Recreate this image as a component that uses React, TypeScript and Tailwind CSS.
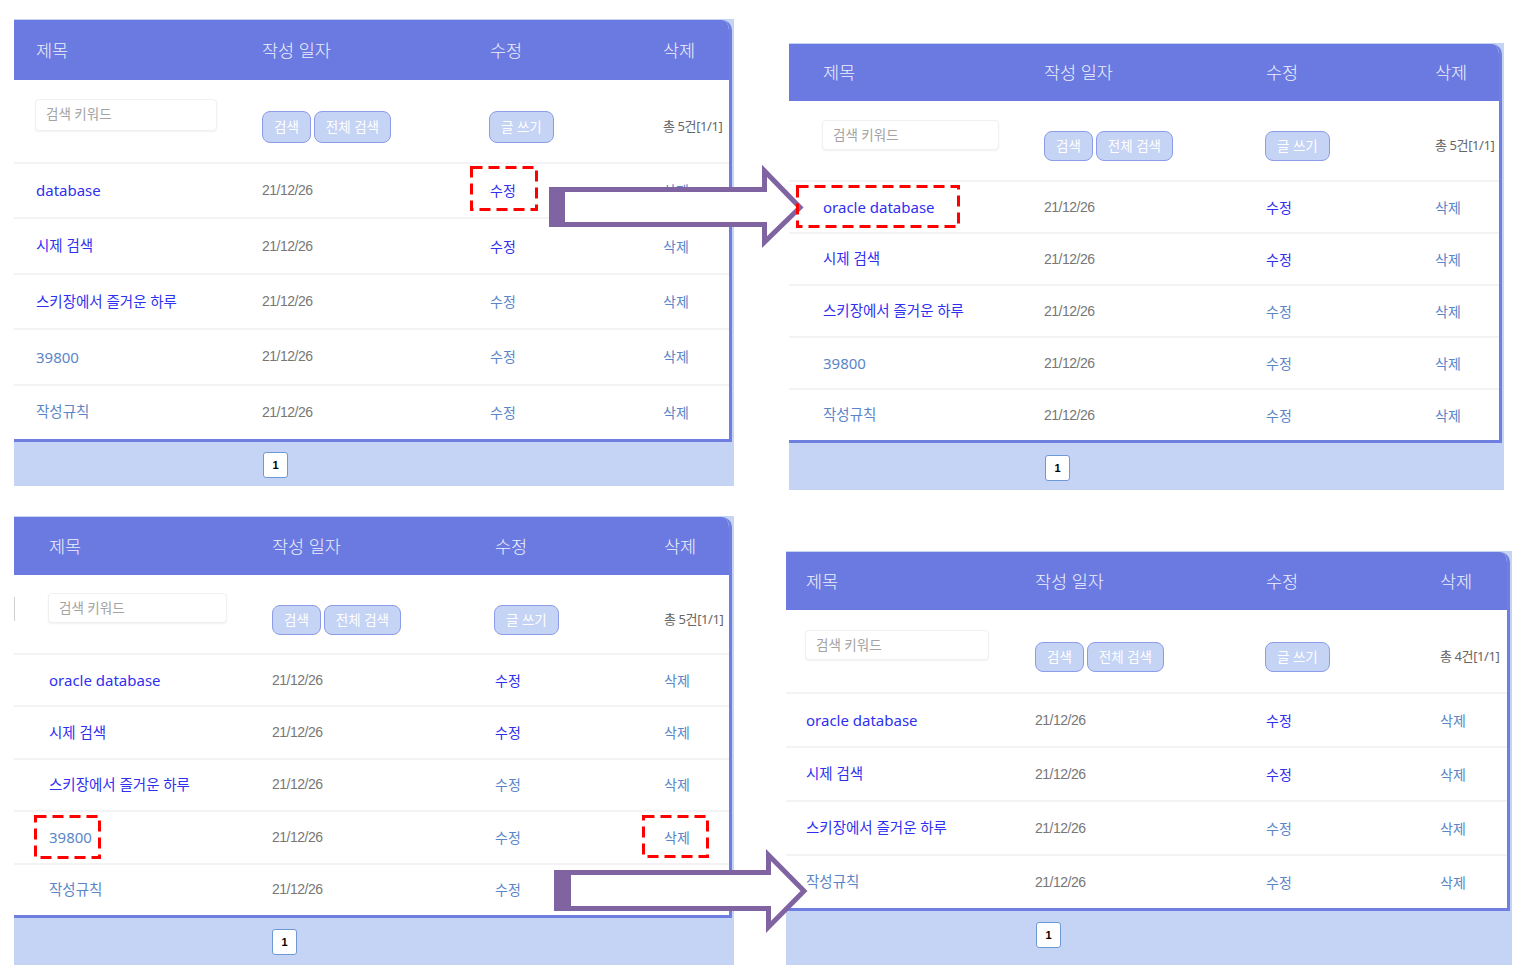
import React from "react";

type Row = {
  title: string;
  latin?: boolean;
  titleVisited?: boolean;
  editVisited?: boolean;
};

type PanelProps = {
  box: string;
  cols: string;
  headerH: string;
  searchH: string;
  inputTop: string;
  inputW: string;
  btnTop: string;
  ctrlH: string;
  rowH: string;
  footerH: string;
  pageLeft: string;
  pageTop: string;
  rows: Row[];
  leftStub?: boolean;
};

const LINK = "text-[#2f2ff0]";
const VISITED = "text-[#5a86c8]";
const FONT = "font-['Noto_Sans','Noto_Sans_CJK_KR',sans-serif]";

const fiveRows = (first: string): Row[] => [
  { title: first, latin: true },
  { title: "시제 검색" },
  { title: "스키장에서 즐거운 하루", editVisited: true },
  { title: "39800", latin: true, titleVisited: true, editVisited: true },
  { title: "작성규칙", titleVisited: true, editVisited: true },
];

function Panel(p: PanelProps) {
  const btn = `rounded-[8px] border-[1.5px] border-[#8d9ce9] bg-[#c5d3f5] px-[11px] text-[13.5px] text-white ${p.ctrlH}`;
  return (
    <div className={`relative flex flex-col bg-[#c5d3f5] pt-[1px] ${FONT} ${p.box}`}>
      <div className="mr-[2px] overflow-hidden rounded-tr-[10px] border-r-[3px] border-b-[3px] border-[#6f7fe0] bg-white">
        {/* header */}
        <div className={`grid items-center bg-[#6b7ae0] text-[17.5px] font-light text-[#eef0fd] ${p.cols} ${p.headerH}`}>
          <span>제목</span>
          <span>작성 일자</span>
          <span>수정</span>
          <span>삭제</span>
        </div>

        {/* search row */}
        <div className={`relative grid items-start ${p.cols} ${p.searchH}`}>
          {p.leftStub && <div className="absolute left-0 top-[22px] h-[24px] w-px bg-[#cfcfcf]" />}
          <div
            className={`-ml-[1px] flex rounded-[4px] border border-[#f0f0f0] bg-white pl-[10px] pt-[4px] text-[13.5px] text-[#a3a3a3] shadow-[0_1px_2px_rgba(0,0,0,0.06)] ${p.inputTop} ${p.inputW} ${p.ctrlH}`}
          >
            검색 키워드
          </div>
          <div className={`flex gap-[3px] ${p.btnTop}`}>
            <button className={btn}>검색</button>
            <button className={btn}>전체 검색</button>
          </div>
          <div className={`-ml-[1px] flex ${p.btnTop}`}>
            <button className={btn}>글 쓰기</button>
          </div>
          <div className={`flex items-center whitespace-nowrap text-[13px] tracking-[-0.4px] text-[#666] ${p.btnTop} ${p.ctrlH}`}>
            총 {p.rows.length}건[1/1]
          </div>
        </div>

        {/* rows */}
        {p.rows.map((r) => (
          <div key={r.title} className={`grid items-center border-t-2 border-[#f3f3f3] ${p.cols} ${p.rowH}`}>
            <span
              className={`whitespace-nowrap ${r.latin ? "text-[15px]" : "text-[14.5px]"} ${r.titleVisited ? VISITED : LINK}`}
            >
              {r.title}
            </span>
            <span className="font-['Liberation_Sans',sans-serif] text-[14px] tracking-[-0.5px] text-[#777]">21/12/26</span>
            <span className={`text-[14px] ${r.editVisited ? VISITED : LINK}`}>수정</span>
            <span className={`text-[14px] ${VISITED}`}>삭제</span>
          </div>
        ))}
      </div>

      {/* footer / pagination */}
      <div className={`flex items-start ${p.footerH}`}>
        <div
          className={`flex h-[26px] w-[25px] items-center justify-center rounded-[3px] border border-[#6d9ad6] bg-white font-['Liberation_Sans',sans-serif] text-[11px] font-bold text-black ${p.pageLeft} ${p.pageTop}`}
        >
          1
        </div>
      </div>
    </div>
  );
}

function Overlay() {
  const purple = "#8064a2";
  return (
    <svg className="pointer-events-none absolute inset-0 h-full w-full" viewBox="0 0 1525 976">
      {/* arrow top */}
      <path
        d="M551.5 189.5 H764.5 V171 L800 207.5 L764.5 242 V224.5 H551.5 Z"
        fill="white"
        stroke={purple}
        strokeWidth="5"
        strokeLinejoin="miter"
      />
      <rect x="549" y="187" width="16" height="40" fill={purple} />
      {/* arrow bottom */}
      <path
        d="M556.5 872.5 H768.5 V855 L804 891 L768.5 927 V908.5 H556.5 Z"
        fill="white"
        stroke={purple}
        strokeWidth="5"
        strokeLinejoin="miter"
      />
      <rect x="554" y="870" width="17" height="41" fill={purple} />

      {/* red dashed highlights */}
      <g fill="none" stroke="#ff0000" strokeWidth="3" strokeDasharray="11 6">
        <rect x="471.5" y="167.5" width="65" height="42" />
        <rect x="797.5" y="186.5" width="161" height="40" />
        <rect x="35.5" y="816.5" width="64" height="41" />
        <rect x="643.5" y="816.5" width="64" height="40" />
      </g>
    </svg>
  );
}

export default function App() {
  return (
    <div className="relative flex h-[976px] w-[1525px] overflow-hidden bg-white">
      <div className="ml-[14px] flex w-[720px] flex-col">
        <Panel
          box="mt-[19px] w-[720px]"
          cols="grid-cols-[226px_228px_173px_1fr] pl-[22px]"
          headerH="h-[60px]"
          searchH="h-[82px]"
          inputTop="mt-[19px]"
          inputW="w-[182px]"
          btnTop="mt-[31px]"
          ctrlH="h-[32px]"
          rowH="h-[55.4px]"
          footerH="h-[44px]"
          pageLeft="ml-[249px]"
          pageTop="mt-[10px]"
          rows={fiveRows("database")}
        />
        <Panel
          box="mt-[30px] w-[720px]"
          cols="grid-cols-[223px_223px_169px_1fr] pl-[35px]"
          headerH="h-[58px]"
          searchH="h-[78px]"
          inputTop="mt-[18px]"
          inputW="w-[179px]"
          btnTop="mt-[30px]"
          ctrlH="h-[30px]"
          rowH="h-[52.4px]"
          footerH="h-[47px]"
          pageLeft="ml-[258px]"
          pageTop="mt-[11px]"
          rows={fiveRows("oracle database")}
          leftStub
        />
      </div>

      <div className="ml-[52px] flex flex-col">
        <Panel
          box="ml-[3px] mt-[43px] w-[715px]"
          cols="grid-cols-[221px_222px_169px_1fr] pl-[34px]"
          headerH="h-[57px]"
          searchH="h-[79px]"
          inputTop="mt-[19px]"
          inputW="w-[177px]"
          btnTop="mt-[30px]"
          ctrlH="h-[30px]"
          rowH="h-[52px]"
          footerH="h-[47px]"
          pageLeft="ml-[256px]"
          pageTop="mt-[12px]"
          rows={fiveRows("oracle database")}
        />
        <Panel
          box="mt-[61px] w-[726px]"
          cols="grid-cols-[229px_231px_174px_1fr] pl-[20px]"
          headerH="h-[58px]"
          searchH="h-[82px]"
          inputTop="mt-[20px]"
          inputW="w-[184px]"
          btnTop="mt-[32px]"
          ctrlH="h-[30px]"
          rowH="h-[54px]"
          footerH="h-[54px]"
          pageLeft="ml-[250px]"
          pageTop="mt-[11px]"
          rows={[
            { title: "oracle database", latin: true },
            { title: "시제 검색" },
            { title: "스키장에서 즐거운 하루", editVisited: true },
            { title: "작성규칙", titleVisited: true, editVisited: true },
          ]}
        />
      </div>

      <Overlay />
    </div>
  );
}
